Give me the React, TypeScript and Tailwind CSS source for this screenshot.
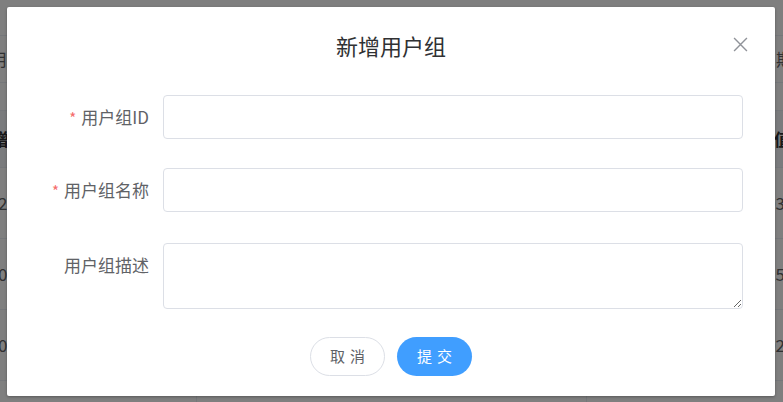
import React from 'react';

const font = { fontFamily: '"Noto Sans CJK SC", "Noto Sans", sans-serif' };

const rows = [
  { left: '20', right: '03' },
  { left: '0', right: '25' },
  { left: '0', right: '02' },
];

function PageBehind() {
  return (
    <div className="w-[783px] h-[402px] bg-white overflow-hidden text-[#606266] text-[17px]">
      <div className="h-[35px]" />
      <div className="h-[47px] border-t border-[#ebeef5] flex items-center justify-between">
        <span className="-ml-[10px]">用户</span>
        <span className="-mr-[10px]">日期</span>
      </div>
      <div className="h-[28px] border-t border-[#ebeef5]" />
      <div className="h-[57px] border-t border-[#ebeef5] bg-[#f5f7fa] flex items-center justify-between font-bold text-[#303133]">
        <span className="-ml-[8px]">增</span>
        <span className="-mr-[8px]">值</span>
      </div>
      {rows.map((r, i) => (
        <div key={i} className="h-[71px] border-t border-[#ebeef5] flex items-center justify-between">
          <span className="-ml-[2px]">{r.left}</span>
          <span className="-mr-[2px]">{r.right}</span>
        </div>
      ))}
      <div className="h-[40px] border-t border-[#ebeef5] flex">
        <div className="w-[197px] border-r border-[#ebeef5]" />
        <div className="w-[390px] border-r border-[#ebeef5]" />
      </div>
    </div>
  );
}

function Field({ label, required, children }: { label: string; required?: boolean; children: React.ReactNode }) {
  return (
    <div className="flex items-start">
      <label className="w-[156px] shrink-0 pr-[14px] text-right text-[17px] leading-[44px] text-[#606266]">
        {required && <span className="text-[#f56c6c] mr-[5px] text-[15px]">*</span>}
        {label}
      </label>
      <div className="flex-1">{children}</div>
    </div>
  );
}

export default function App() {
  return (
    <div className="relative w-[783px] h-[402px] overflow-hidden" style={font}>
      <PageBehind />
      <div className="absolute inset-0 bg-black/50">
        <div className="relative mt-[7px] ml-[7px] w-[768px] bg-white rounded-[2px] shadow-[0_1px_3px_rgba(0,0,0,0.3)]">
          <div className="pt-[23px] text-center text-[22px] leading-[30px] text-[#303133]">新增用户组</div>
          <button className="absolute top-[30px] right-[27px] w-[15px] h-[15px] text-[#909399]">
            <svg viewBox="0 0 14 14" width="15" height="15" fill="none" stroke="currentColor" strokeWidth="1.3">
              <path d="M1 1 L13 13 M13 1 L1 13" />
            </svg>
          </button>
          <div className="pt-[35px] pr-[32px]">
            <div className="mb-[28px]">
              <Field label="用户组ID" required>
                <input className="w-full h-[44px] border border-[#dcdfe6] rounded-[4px] px-[15px] outline-none" />
              </Field>
            </div>
            <div className="mb-[30px]">
              <Field label="用户组名称" required>
                <input className="w-full h-[44px] border border-[#dcdfe6] rounded-[4px] px-[15px] outline-none" />
              </Field>
            </div>
            <Field label="用户组描述">
              <textarea className="block w-full h-[66px] border border-[#dcdfe6] rounded-[4px] px-[15px] py-[5px] outline-none" />
            </Field>
          </div>
          <div className="pt-[28px] pb-[20px] flex justify-center gap-[12px]">
            <button className="w-[75px] h-[39px] rounded-full border border-[#dcdfe6] bg-white text-[15px] tracking-[5px] pl-[5px] text-[#606266]">
              取消
            </button>
            <button className="w-[75px] h-[39px] rounded-full bg-[#409eff] text-[15px] tracking-[5px] pl-[5px] text-white">
              提交
            </button>
          </div>
        </div>
      </div>
    </div>
  );
}
